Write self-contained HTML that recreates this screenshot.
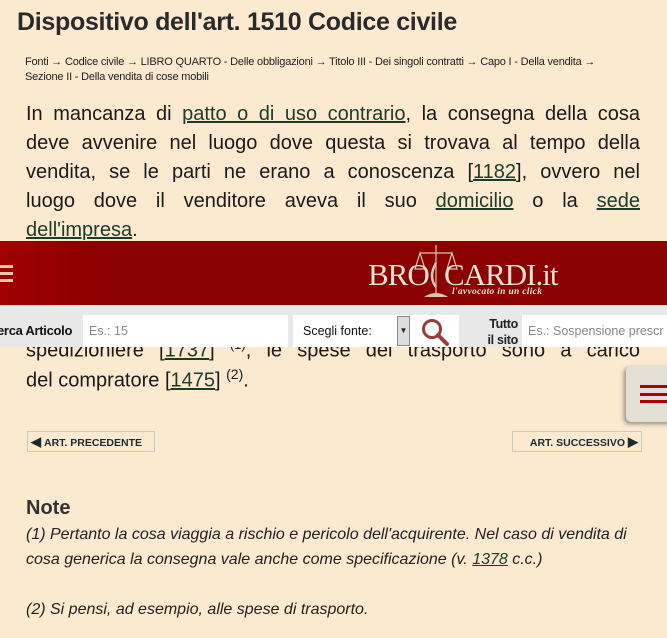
<!DOCTYPE html>
<html><head><meta charset="utf-8"><style>
body{margin:0;width:667px;height:638px;overflow:hidden;background:#fbe9d0;font-family:"Liberation Sans",sans-serif;color:#222;position:relative}
h1{position:absolute;left:17px;top:8px;margin:0;font-size:25px;font-weight:bold;color:#2a2a2a;letter-spacing:-0.3px}
.bc{position:absolute;left:25px;top:55px;width:610px;font-size:11px;line-height:15px;color:#222;letter-spacing:-0.2px}
.l{position:absolute;left:26px;width:614px;font-size:20px;text-align:justify;text-align-last:justify;color:#1a1a1a;white-space:nowrap}
.l.e{text-align-last:left}
a{color:#1d3a2b;text-decoration:underline}
.hdr{position:absolute;left:0;top:241px;width:667px;height:64px;background:linear-gradient(90deg,#a00000,#8b0000 15%,#8b0000)}
.srch{position:absolute;left:0;top:305px;width:667px;height:42px;background:#e8e8e8}
.nav{position:absolute;top:431px;height:19px;border:1px solid #c9c9c9;font:bold 10.5px "Liberation Sans",sans-serif;color:#1b2b2b;line-height:19px}
.in{position:absolute;top:10px;height:32px;background:#fff;font-size:12.5px;color:#888;line-height:32px;padding-left:6px;box-sizing:border-box;white-space:nowrap;overflow:hidden}
</style></head><body>
<h1>Dispositivo dell'art. 1510 Codice civile</h1>
<div class="bc">Fonti → Codice civile → LIBRO QUARTO - Delle obbligazioni → Titolo III - Dei singoli contratti → Capo I - Della vendita →<br>Sezione II - Della vendita di cose mobili</div>
<div class="l" style="top:103px">In mancanza di <a>patto o di uso contrario</a>, la consegna della cosa</div>
<div class="l" style="top:132px">deve avvenire nel luogo dove questa si trovava al tempo della</div>
<div class="l" style="top:161px">vendita, se le parti ne erano a conoscenza [<a>1182</a>], ovvero nel</div>
<div class="l" style="top:190px">luogo dove il venditore aveva il suo <a>domicilio</a> o la <a>sede</a></div>
<div class="l e" style="top:219px"><a>dell'impresa</a>.</div>
<div class="l" style="top:337px">spedizioniere [<a>1737</a>] <sup style="font-size:13px">(1)</sup>, le spese del trasporto sono a carico</div>
<div class="l e" style="top:366px">del compratore [<a>1475</a>] <sup style="font-size:14px">(2)</sup>.</div>
<div class="hdr">
<div style="position:absolute;left:0;top:24px;width:13px"><div style="height:3px;background:#e8c9b0;margin-bottom:4px"></div><div style="height:3px;background:#e8c9b0;margin-bottom:4px"></div><div style="height:3px;background:#e8c9b0"></div></div>
<svg style="position:absolute;left:414px;top:2px" width="44" height="56"><g stroke="#d8c8b0" fill="none" stroke-width="1.2"><line x1="22" y1="2" x2="22" y2="50"/><line x1="6" y1="10" x2="38" y2="10"/><path d="M6 10 L1 26 L11 26 Z M38 10 L33 26 L43 26 Z"/></g><path d="M10 54 Q22 46 34 54 Z" fill="#d8c8b0"/><path d="M22 20 Q14 34 22 44" stroke="#d8c8b0" stroke-width="2.5" fill="none"/></svg>
<div style="position:absolute;left:368px;top:16px;font:31px 'Liberation Serif',serif;color:#ede3d6;letter-spacing:-1px">BRO</div>
<div style="position:absolute;left:444px;top:16px;font:31px 'Liberation Serif',serif;color:#ede3d6;letter-spacing:-1px">CARDI.it</div>
<div style="position:absolute;left:452px;top:46px;font:italic bold 9.5px 'Liberation Serif',serif;color:#ede3d6;letter-spacing:0.3px">l'avvocato in un click</div>
</div>
<div class="srch">
<div style="position:absolute;left:-3px;top:18px;font:bold 13px 'Liberation Sans',sans-serif;color:#111;letter-spacing:-0.3px">erca Articolo</div>
<div class="in" style="left:83px;width:205px">Es.: 15</div>
<div class="in" style="left:293px;width:118px;color:#111;padding-left:10px">Scegli fonte:</div>
<div style="position:absolute;left:397px;top:11px;width:13px;height:30px;background:#ddd;border:1px solid #888;box-sizing:border-box;font-size:8px;text-align:center;line-height:28px">▼</div>
<div class="in" style="left:411px;width:48px"></div>
<svg style="position:absolute;left:420px;top:12px" width="32" height="30"><circle cx="12" cy="12" r="8.5" stroke="#9a3b3b" stroke-width="3" fill="none"/><line x1="18" y1="18" x2="27" y2="27" stroke="#9a3b3b" stroke-width="4" stroke-linecap="round"/></svg>
<div style="position:absolute;left:476px;top:11px;font:bold 12.5px/16px 'Liberation Sans',sans-serif;text-align:right;width:42px;letter-spacing:-0.3px">Tutto<br>il sito</div>
<div class="in" style="left:522px;width:150px">Es.: Sospensione prescr</div>
</div>
<div style="position:absolute;left:626px;top:366px;width:50px;height:56px;background:#e3e1d6;border-radius:5px;box-shadow:-2px 2px 4px rgba(0,0,0,.4)">
<div style="position:absolute;left:14px;top:19px;width:30px;height:3px;background:#b00000"></div>
<div style="position:absolute;left:14px;top:27px;width:30px;height:3px;background:#b00000"></div>
<div style="position:absolute;left:14px;top:34px;width:30px;height:3px;background:#b00000"></div>
</div>
<div class="nav" style="left:27px;width:126px"><span style="font-size:13px;padding:0 3px">◀</span>ART. PRECEDENTE</div>
<div class="nav" style="left:512px;width:128px;text-align:right">ART. SUCCESSIVO<span style="font-size:13px;padding:0 3px">▶</span></div>
<div style="position:absolute;left:26px;top:497px;font:bold 20px 'Liberation Sans',sans-serif;color:#333">Note</div>
<div style="position:absolute;left:26px;top:522px;width:640px;font:italic 16px/25px 'Liberation Sans',sans-serif;color:#222;white-space:nowrap">(1) Pertanto la cosa viaggia a rischio e pericolo dell'acquirente. Nel caso di vendita di<br>cosa generica la consegna vale anche come specificazione (v. <a>1378</a> c.c.)<br><br>(2) Si pensi, ad esempio, alle spese di trasporto.</div>
</body></html>
